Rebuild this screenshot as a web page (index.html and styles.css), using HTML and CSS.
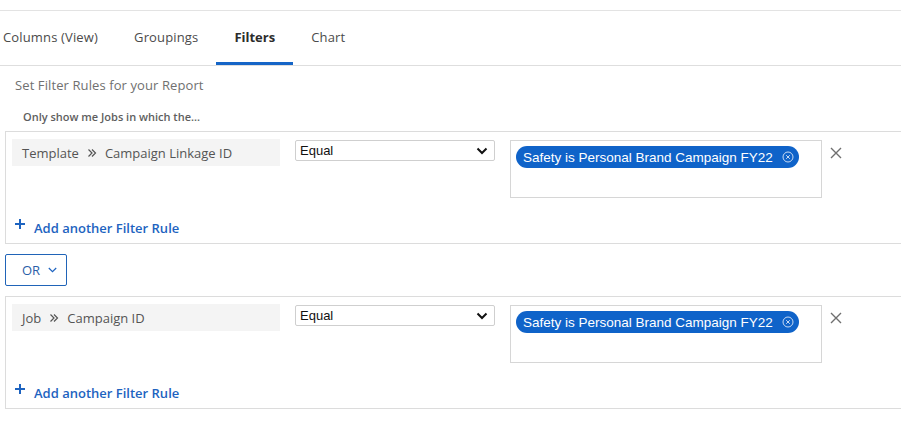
FILE: index.html
```html
<!DOCTYPE html>
<html>
<head>
<meta charset="utf-8">
<link rel="stylesheet" href="styles.css">
</head>
<body>
<div class="topline"></div>
<nav class="tabs">
  <div class="tab">Columns (View)</div>
  <div class="tab">Groupings</div>
  <div class="tab active">Filters</div>
  <div class="tab">Chart</div>
</nav>
<div class="heading">Set Filter Rules for your Report</div>
<div class="subheading">Only show me Jobs in which the...</div>

<section class="group">
  <div class="rule">
    <div class="field"><span>Template</span><svg class="sep" width="10" height="10" viewBox="0 0 10 10"><path d="M1.5 1.5 L5 5 L1.5 8.5 M5 1.5 L8.5 5 L5 8.5" fill="none" stroke="#555" stroke-width="1.2"/></svg><span>Campaign Linkage ID</span></div>
    <div class="select"><span>Equal</span><svg width="12" height="8" viewBox="0 0 12 8"><path d="M1.5 1.5 L6 6 L10.5 1.5" fill="none" stroke="#111" stroke-width="2"/></svg></div>
    <div class="values">
      <span class="pill">Safety is Personal Brand Campaign FY22<svg class="pill-x" width="12" height="12" viewBox="0 0 12 12"><circle cx="6" cy="6" r="5" fill="none" stroke="#c9dbf3" stroke-width="1"/><path d="M4.2 4.2 L7.8 7.8 M7.8 4.2 L4.2 7.8" stroke="#c9dbf3" stroke-width="1"/></svg></span>
    </div>
    <svg class="remove" width="12" height="12" viewBox="0 0 12 12"><path d="M1 1 L11 11 M11 1 L1 11" stroke="#6f6f6f" stroke-width="1.4"/></svg>
  </div>
  <div class="add"><svg width="10" height="10" viewBox="0 0 10 10"><path d="M5 0 V10 M0 5 H10" stroke="#1d63c0" stroke-width="2"/></svg><span>Add another Filter Rule</span></div>
</section>

<div class="or"><span>OR</span><svg width="9" height="6" viewBox="0 0 9 6"><path d="M0.8 1 L4.5 4.7 L8.2 1" fill="none" stroke="#1d63c0" stroke-width="1.2"/></svg></div>

<section class="group">
  <div class="rule">
    <div class="field"><span>Job</span><svg class="sep" width="10" height="10" viewBox="0 0 10 10"><path d="M1.5 1.5 L5 5 L1.5 8.5 M5 1.5 L8.5 5 L5 8.5" fill="none" stroke="#555" stroke-width="1.2"/></svg><span>Campaign ID</span></div>
    <div class="select"><span>Equal</span><svg width="12" height="8" viewBox="0 0 12 8"><path d="M1.5 1.5 L6 6 L10.5 1.5" fill="none" stroke="#111" stroke-width="2"/></svg></div>
    <div class="values">
      <span class="pill">Safety is Personal Brand Campaign FY22<svg class="pill-x" width="12" height="12" viewBox="0 0 12 12"><circle cx="6" cy="6" r="5" fill="none" stroke="#c9dbf3" stroke-width="1"/><path d="M4.2 4.2 L7.8 7.8 M7.8 4.2 L4.2 7.8" stroke="#c9dbf3" stroke-width="1"/></svg></span>
    </div>
    <svg class="remove" width="12" height="12" viewBox="0 0 12 12"><path d="M1 1 L11 11 M11 1 L1 11" stroke="#6f6f6f" stroke-width="1.4"/></svg>
  </div>
  <div class="add"><svg width="10" height="10" viewBox="0 0 10 10"><path d="M5 0 V10 M0 5 H10" stroke="#1d63c0" stroke-width="2"/></svg><span>Add another Filter Rule</span></div>
</section>
</body>
</html>
```
FILE: styles.css
```css
html, body {
  margin: 0;
  padding: 0;
  overflow: hidden;
  background: #fff;
  font-family: "Open Sans", "Liberation Sans", sans-serif;
  color: #333;
}

.topline {
  height: 10px;
  border-bottom: 1px solid #e3e3e3;
}

.tabs {
  display: flex;
  margin-left: -15px;
  border-bottom: 1px solid #dedede;
}

.tab {
  height: 51px;
  line-height: 52px;
  padding: 0 18px;
  font-size: 13px;
  letter-spacing: 0.15px;
  color: #4b4b4b;
  border-bottom: 3px solid transparent;
}

.tab.active {
  font-weight: 700;
  letter-spacing: 0;
  color: #2c2c2c;
  border-bottom-color: #1565c7;
}

.heading {
  margin: 10px 0 0 15px;
  font-size: 13px;
  line-height: 18px;
  letter-spacing: 0.1px;
  color: #707070;
}

.subheading {
  margin: 15px 0 0 23px;
  font-size: 11px;
  line-height: 16px;
  font-weight: 600;
  color: #5e5e5e;
}

.group {
  margin: 6px 0 0 5px;
  width: 940px;
  border: 1px solid #dcdcdc;
  padding: 7px 6px 7px 6px;
  box-sizing: border-box;
}

.group + .or {
  margin-top: 10px;
}

.or + .group {
  margin-top: 10px;
}

.rule {
  display: flex;
  align-items: flex-start;
}

.field {
  width: 268px;
  height: 27px;
  box-sizing: border-box;
  background: #f4f4f4;
  display: flex;
  align-items: center;
  padding-left: 10px;
  font-size: 13px;
  color: #545454;
  margin-right: 15px;
}

.field .sep {
  margin: 0 8px;
}

.select {
  margin-top: 1px;
  width: 200px;
  height: 21px;
  box-sizing: border-box;
  border: 1px solid #cfcfcf;
  border-radius: 2px;
  display: flex;
  align-items: center;
  justify-content: space-between;
  padding: 0 6px 0 4px;
  font-family: "Liberation Sans", Arial, sans-serif;
  font-size: 13px;
  color: #111;
  margin-right: 15px;
}

.values {
  margin-top: 1px;
  width: 312px;
  height: 58px;
  box-sizing: border-box;
  border: 1px solid #d6d6d6;
  padding: 5px;
  display: flex;
  align-items: flex-start;
}

.pill {
  display: inline-flex;
  align-items: center;
  height: 22px;
  box-sizing: border-box;
  padding: 0 5px 0 7px;
  border-radius: 11px;
  background: #0f63c9;
  color: #fff;
  font-family: "Liberation Sans", Arial, sans-serif;
  font-size: 13.5px;
}

.pill-x {
  margin-left: 9px;
}

.remove {
  margin: 8px 0 0 8px;
}

.add {
  margin-top: 22px;
  display: flex;
  align-items: center;
  height: 16px;
  font-size: 13px;
  font-weight: 600;
  color: #1d63c0;
  padding-left: 3px;
}

.add svg {
  margin: -8px 9px 0 0;
}

.or {
  margin-left: 5px;
  width: 62px;
  height: 32px;
  box-sizing: border-box;
  border: 1px solid #2064b8;
  border-radius: 2px;
  display: flex;
  align-items: center;
  padding-left: 16px;
  gap: 8px;
  font-size: 13px;
  color: #2a5ea8;
}
```
